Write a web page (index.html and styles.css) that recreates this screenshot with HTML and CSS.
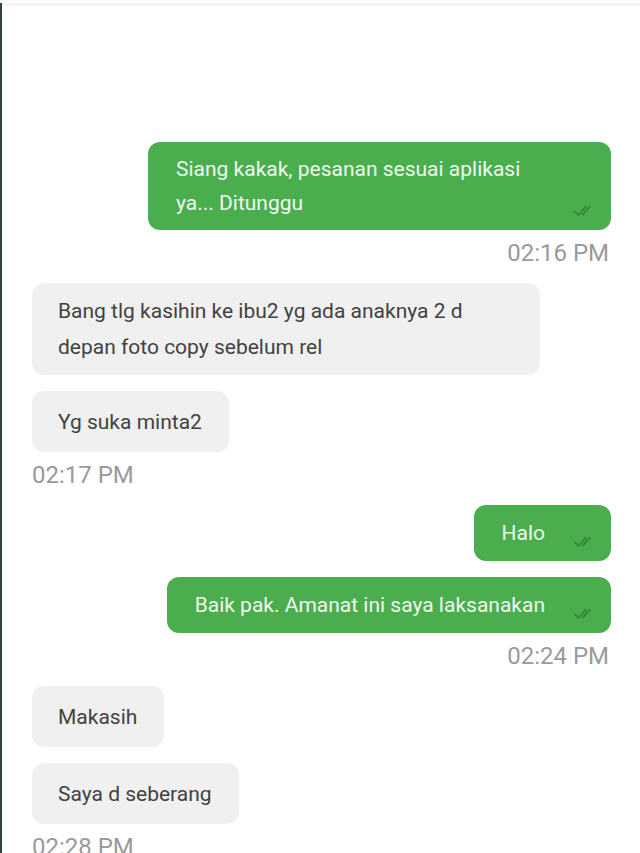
FILE: index.html
```html
<!DOCTYPE html>
<html>
<head>
<meta charset="utf-8">
<link rel="stylesheet" href="styles.css">
</head>
<body>
<div class="screen">
  <div class="topbar"></div>
  <div class="chat">
    <div class="msg sent two">Siang kakak, pesanan sesuai aplikasi ya... Ditunggu<svg class="tick" viewBox="0 0 18 12"><path d="M1 6.5l3.2 3.2L10.5 2.5M7.2 9.7L13.5 2.5"/></svg></div>
    <div class="time right">02:16 PM</div>

    <div class="msg recv wide">Bang tlg kasihin ke ibu2 yg ada anaknya 2 d<br>depan foto copy sebelum rel</div>
    <div class="msg recv">Yg suka minta2</div>
    <div class="time">02:17 PM</div>

    <div class="msg sent">Halo<svg class="tick" viewBox="0 0 18 12"><path d="M1 6.5l3.2 3.2L10.5 2.5M7.2 9.7L13.5 2.5"/></svg></div>
    <div class="msg sent">Baik pak. Amanat ini saya laksanakan<svg class="tick" viewBox="0 0 18 12"><path d="M1 6.5l3.2 3.2L10.5 2.5M7.2 9.7L13.5 2.5"/></svg></div>
    <div class="time right">02:24 PM</div>

    <div class="msg recv">Makasih</div>
    <div class="msg recv">Saya d seberang</div>
    <div class="time">02:28 PM</div>
  </div>
</div>
</body>
</html>
```
FILE: styles.css
```css
html, body {
  margin: 0;
  padding: 0;
  background: #ffffff;
}
body {
  font-family: Roboto, "Noto Sans", "Liberation Sans", sans-serif;
  width: 640px;
  height: 853px;
  overflow: hidden;
}
.screen {
  border-left: 2px solid #34403a;
  height: 853px;
  box-sizing: border-box;
}
.topbar {
  height: 3px;
  margin-top: 3px;
  background: linear-gradient(#f2f2f2, #f7f7f7);
}
.chat {
  display: flex;
  flex-direction: column;
  padding: 136px 29px 0 30px;
}
.msg {
  position: relative;
  font-size: 21px;
  border-radius: 12px;
  margin-bottom: 16px;
  box-sizing: border-box;
}
.sent {
  align-self: flex-end;
  background: #4aae4e;
  color: #eef8ee;
  line-height: 34px;
  padding: 11px 66px 11px 28px;
  max-width: 463px;
}
.sent.two {
  padding-top: 10px;
  padding-bottom: 10px;
}
.recv {
  align-self: flex-start;
  background: #f0f0f0;
  color: #424242;
  line-height: 36px;
  padding: 12.5px 27px 12.5px 26px;
}
.recv.wide {
  width: 508px;
  padding-top: 10px;
  padding-bottom: 10px;
}
.tick {
  position: absolute;
  right: 15px;
  bottom: 12px;
  width: 23px;
  height: 15px;
  fill: none;
  stroke: #2e7a32;
  stroke-width: 1.3;
  opacity: 0.8;
}
.time {
  font-size: 24px;
  line-height: 30px;
  color: #9a9a9a;
  margin-top: -8px;
  margin-bottom: 15px;
}
.time.right {
  align-self: flex-end;
  margin-right: 2px;
}
```
